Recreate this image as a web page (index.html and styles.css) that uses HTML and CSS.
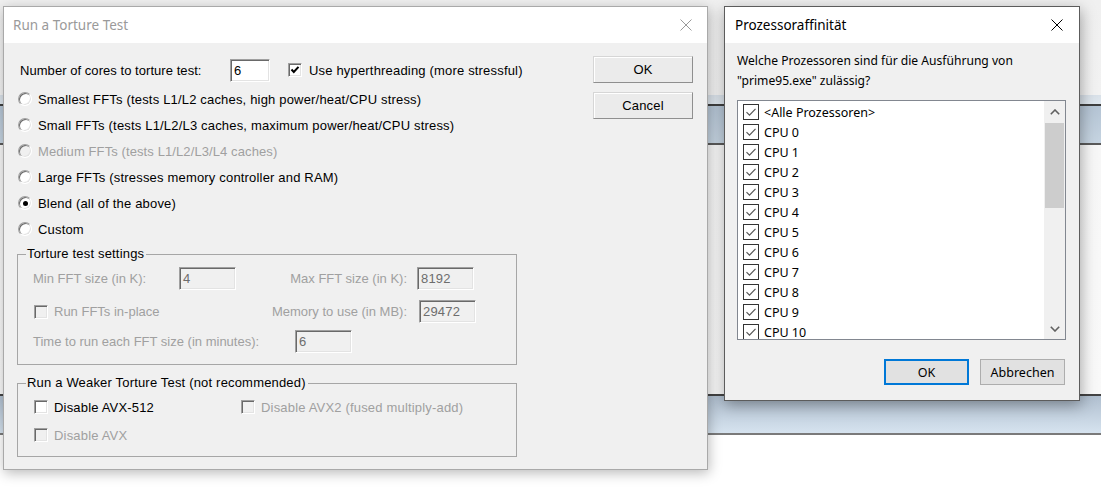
FILE: index.html
```html
<!DOCTYPE html>
<html lang="en">
<head>
<meta charset="utf-8">
<title>Run a Torture Test</title>
<link rel="stylesheet" href="styles.css">
</head>
<body>
<div class="desktop">

  <div class="win win-left">
    <div class="titlebar inactive">
      <span class="title">Run a Torture Test</span>
      <svg class="close" width="12" height="12" viewBox="0 0 12 12"><path d="M0.5 0.5 L11.5 11.5 M11.5 0.5 L0.5 11.5" stroke="#9a9a9a" stroke-width="1" fill="none"/></svg>
    </div>
    <div class="classic-body">
      <div class="main-col">
        <div class="cores-row">
          <span class="cores-lbl">Number of cores to torture test:</span>
          <span class="edit w40">6</span>
          <span class="chk ht"><svg width="12" height="12" viewBox="0 0 12 12"><polyline points="2.5,5.5 4.8,8 9.5,2.8" stroke="#000" stroke-width="2" fill="none"/></svg></span>
          <span class="nw">Use hyperthreading (more stressful)</span>
        </div>
        <div class="radios">
          <div class="radio-row"><span class="radio"></span>Smallest FFTs (tests L1/L2 caches, high power/heat/CPU stress)</div>
          <div class="radio-row"><span class="radio"></span>Small FFTs (tests L1/L2/L3 caches, maximum power/heat/CPU stress)</div>
          <div class="radio-row disabled"><span class="radio dis"></span>Medium FFTs (tests L1/L2/L3/L4 caches)</div>
          <div class="radio-row"><span class="radio"></span>Large FFTs (stresses memory controller and RAM)</div>
          <div class="radio-row"><span class="radio on"></span>Blend (all of the above)</div>
          <div class="radio-row"><span class="radio"></span>Custom</div>
        </div>

        <fieldset class="group g1">
          <legend>Torture test settings</legend>
          <div class="grow r1">
            <span class="dlbl w146">Min FFT size (in K):</span>
            <span class="edit dis w57">4</span>
            <span class="dlbl rlbl w181">Max FFT size (in K):</span>
            <span class="edit dis w57">8192</span>
          </div>
          <div class="grow r2">
            <span class="item w202"><span class="chk dis"></span><span class="dlbl">Run FFTs in-place</span></span>
            <span class="dlbl rlbl w183">Memory to use (in MB):</span>
            <span class="edit dis w57">29472</span>
          </div>
          <div class="grow r3">
            <span class="dlbl w262">Time to run each FFT size (in minutes):</span>
            <span class="edit dis w57">6</span>
          </div>
        </fieldset>

        <fieldset class="group g2">
          <legend>Run a Weaker Torture Test (not recommended)</legend>
          <div class="crow c1">
            <span class="item w207"><span class="chk"></span><span>Disable AVX-512</span></span>
            <span class="item"><span class="chk dis"></span><span class="dlbl">Disable AVX2 (fused multiply-add)</span></span>
          </div>
          <div class="crow c2">
            <span class="item"><span class="chk dis"></span><span class="dlbl">Disable AVX</span></span>
          </div>
        </fieldset>
      </div>
      <div class="btn-col">
        <button class="cbtn">OK</button>
        <button class="cbtn">Cancel</button>
      </div>
    </div>
  </div>

  <div class="win win-right">
    <div class="titlebar">
      <span class="title dark">Prozessoraffinität</span>
      <svg class="close" width="12" height="12" viewBox="0 0 12 12"><path d="M0.5 0.5 L11.5 11.5 M11.5 0.5 L0.5 11.5" stroke="#000" stroke-width="1" fill="none"/></svg>
    </div>
    <div class="modern-body">
      <p class="question">Welche Prozessoren sind für die Ausführung von<br>"prime95.exe" zulässig?</p>
      <div class="listbox">
        <div class="items">
          <div class="li"><span class="mchk"></span>&lt;Alle Prozessoren&gt;</div>
          <div class="li"><span class="mchk"></span>CPU 0</div>
          <div class="li"><span class="mchk"></span>CPU 1</div>
          <div class="li"><span class="mchk"></span>CPU 2</div>
          <div class="li"><span class="mchk"></span>CPU 3</div>
          <div class="li"><span class="mchk"></span>CPU 4</div>
          <div class="li"><span class="mchk"></span>CPU 5</div>
          <div class="li"><span class="mchk"></span>CPU 6</div>
          <div class="li"><span class="mchk"></span>CPU 7</div>
          <div class="li"><span class="mchk"></span>CPU 8</div>
          <div class="li"><span class="mchk"></span>CPU 9</div>
          <div class="li"><span class="mchk"></span>CPU 10</div>
        </div>
        <div class="scrollbar">
          <div class="sb-btn"><svg width="10" height="6" viewBox="0 0 10 6"><polyline points="0.8,5.2 5,1 9.2,5.2" stroke="#606060" stroke-width="1.6" fill="none"/></svg></div>
          <div class="sb-track"><div class="sb-thumb"></div></div>
          <div class="sb-btn"><svg width="10" height="6" viewBox="0 0 10 6"><polyline points="0.8,0.8 5,5 9.2,0.8" stroke="#606060" stroke-width="1.6" fill="none"/></svg></div>
        </div>
      </div>
      <div class="mbtns">
        <button class="mbtn default">OK</button>
        <button class="mbtn">Abbrechen</button>
      </div>
    </div>
  </div>

</div>
</body>
</html>
```

FILE: styles.css
```css
html, body {
  margin: 0;
  padding: 0;
  width: 1101px;
  height: 487px;
  overflow: hidden;
}

.desktop {
  position: relative;
  width: 1101px;
  height: 487px;
  background: linear-gradient(to bottom,
    #f0f0f0 0px, #f2f2f2 95px,
    #d9e1e9 95px, #dfe7ee 104px,
    #3f3f3f 104px, #3f3f3f 106px,
    #b4c4d4 106px, #c6d4e1 143px,
    #5a5a5a 143px, #5a5a5a 145px,
    #f7f7f7 145px, #f9f9f9 394px,
    #444444 394px, #444444 396px,
    #b0bfcf 396px, #d6e3ef 433px,
    #7a7a7a 433px, #7a7a7a 435px,
    #ffffff 435px, #ffffff 487px);
}

.win {
  position: absolute;
  box-sizing: border-box;
  display: flex;
  flex-direction: column;
  background: #f0f0f0;
}

.win-left {
  left: 3px;
  top: 6px;
  width: 705px;
  height: 464px;
  border: 1px solid #a9a9a9;
  box-shadow: 1px 3px 12px rgba(0, 0, 0, 0.28);
}

.win-right {
  left: 724px;
  top: 6px;
  width: 356px;
  height: 395px;
  border: 1px solid #5c5c5c;
  box-shadow: 1px 4px 14px rgba(0, 0, 0, 0.35);
}

.titlebar {
  height: 36px;
  flex: none;
  background: #ffffff;
  display: flex;
  align-items: center;
  justify-content: space-between;
  padding: 0 15px 0 9px;
}

.win-right .titlebar {
  padding: 0 16px 0 10px;
}

.title {
  font-family: "Noto Sans", "Open Sans", sans-serif;
  font-size: 13.5px;
  color: #9a9a9a;
  padding-bottom: 1px;
}

.title.dark {
  color: #000;
}

.close {
  display: block;
}

/* ---------- classic dialog ---------- */

.classic-body {
  flex: 1;
  display: flex;
  padding: 14px 0 0 13px;
  font-family: "Liberation Sans", Arial, sans-serif;
  font-size: 13px;
  letter-spacing: 0.18px;
  color: #000;
  white-space: nowrap;
}

.main-col {
  width: 500px;
  flex: none;
  display: flex;
  flex-direction: column;
}

.cores-row {
  height: 26px;
  display: flex;
  align-items: center;
}

.cores-lbl {
  width: 210px;
  flex: none;
  margin-left: 3px;
  letter-spacing: 0.05px;
}

.nw {
  flex: none;
}

.edit {
  box-sizing: border-box;
  height: 23px;
  display: inline-flex;
  align-items: center;
  padding-left: 3px;
  background: #ffffff;
  border: 1px solid;
  border-color: #a0a0a0 #ffffff #ffffff #a0a0a0;
  box-shadow: inset 1px 1px 0 #696969, inset -1px -1px 0 #e3e3e3;
  flex: none;
}

.edit.dis {
  background: #f0f0f0;
  color: #6d6d6d;
}

.w40 { width: 40px; }
.w57 { width: 57px; }
.w146 { width: 146px; flex: none; }
.w181 { width: 181px; flex: none; }
.w183 { width: 183px; flex: none; }
.w202 { width: 202px; flex: none; }
.w207 { width: 207px; flex: none; }
.w262 { width: 262px; flex: none; }

.chk {
  box-sizing: border-box;
  width: 14px;
  height: 14px;
  flex: none;
  display: inline-flex;
  align-items: center;
  justify-content: center;
  background: #ffffff;
  border: 1px solid;
  border-color: #a0a0a0 #ffffff #ffffff #a0a0a0;
  box-shadow: inset 1px 1px 0 #696969, inset -1px -1px 0 #e3e3e3;
  margin-right: 6px;
}

.chk.dis {
  background: #f0f0f0;
}

.chk svg {
  display: block;
}

.ht {
  margin-left: 18px;
  margin-right: 7px;
}

.radios {
  margin-top: 3px;
  display: flex;
  flex-direction: column;
}

.radio-row {
  height: 26px;
  display: flex;
  align-items: center;
}

.radio-row.disabled {
  color: #a0a0a0;
  letter-spacing: 0.1px;
}

.radio {
  box-sizing: border-box;
  width: 14px;
  height: 14px;
  border-radius: 50%;
  margin: 0 6px 0 1px;
  flex: none;
  background: #ffffff;
  border: 1px solid;
  border-color: #a0a0a0 #ffffff #ffffff #a0a0a0;
  box-shadow: inset 1px 1px 0 #696969, inset -1px -1px 0 #e3e3e3;
  display: flex;
  align-items: center;
  justify-content: center;
}

.radio.dis {
  background: #f0f0f0;
}

.radio.on::after {
  content: "";
  width: 5px;
  height: 5px;
  border-radius: 50%;
  background: #000;
}

.group {
  box-sizing: border-box;
  margin: 0;
  padding: 0;
  min-inline-size: 0;
  border: 1px solid #a6a6a6;
  border-radius: 0;
}

.group legend {
  margin-left: 8px;
  padding: 0 2px 0 1px;
  line-height: 14px;
  font-size: 13px;
}

.g1 {
  margin-top: 5px;
  height: 118px;
}

.g1 .dlbl {
  letter-spacing: 0;
}

.g2 {
  margin-top: 11px;
  height: 81px;
}

.dlbl {
  color: #a0a0a0;
}

.rlbl {
  text-align: right;
  box-sizing: border-box;
  padding-right: 10px;
}

.w183.rlbl {
  padding-right: 12px;
}

.grow {
  height: 23px;
  display: flex;
  align-items: center;
  padding-left: 15px;
}

.r1 { margin-top: 6px; }
.r2 { margin-top: 10px; padding-left: 16px; }
.r3 { margin-top: 7px; }

.item {
  display: inline-flex;
  align-items: center;
}

.crow {
  height: 16px;
  display: flex;
  align-items: center;
  padding-left: 16px;
}

.c1 { margin-top: 9px; }
.c2 { margin-top: 12px; }

.btn-col {
  margin-left: 76px;
  margin-top: -1px;
  display: flex;
  flex-direction: column;
  gap: 9px;
}

.cbtn {
  width: 100px;
  height: 27px;
  box-sizing: border-box;
  margin: 0;
  padding: 0;
  font-family: "Liberation Sans", Arial, sans-serif;
  font-size: 13px;
  letter-spacing: 0.18px;
  color: #000;
  background: #ebebeb;
  border: 1px solid;
  border-color: #d6d6d6 #8f8f8f #8f8f8f #d6d6d6;
  box-shadow: inset 1px 1px 0 #ffffff;
}

/* ---------- modern dialog ---------- */

.modern-body {
  flex: 1;
  padding: 7px 13px 0 12px;
  font-family: "Noto Sans", "Open Sans", sans-serif;
  font-size: 12.5px;
  color: #000;
}

.question {
  margin: 0;
  padding-top: 1px;
  line-height: 20px;
  font-size: 12.1px;
}

.listbox {
  box-sizing: border-box;
  margin-top: 9px;
  width: 329px;
  height: 240px;
  border: 1px solid #828790;
  background: #ffffff;
  display: flex;
}

.items {
  flex: 1;
  overflow: hidden;
  padding: 1px 0 0 5px;
}

.li {
  height: 20px;
  display: flex;
  align-items: center;
}

.mchk {
  box-sizing: border-box;
  width: 16px;
  height: 16px;
  flex: none;
  border: 1px solid #333333;
  margin-right: 5px;
  background: #ffffff url("data:image/svg+xml,%3Csvg xmlns='http://www.w3.org/2000/svg' width='14' height='14' viewBox='0 0 14 14'%3E%3Cpolyline points='2.5,7.2 5.5,10.2 11.5,3.8' stroke='%23555' stroke-width='1.2' fill='none'/%3E%3C/svg%3E") center / 14px 14px no-repeat;
}

.scrollbar {
  width: 21px;
  flex: none;
  background: #f0f0f0;
  display: flex;
  flex-direction: column;
}

.sb-btn {
  height: 21px;
  flex: none;
  display: flex;
  align-items: center;
  justify-content: center;
}

.sb-btn svg {
  display: block;
}

.sb-track {
  flex: 1;
  padding: 1px 1px 0 1px;
}

.sb-thumb {
  height: 85px;
  background: #cdcdcd;
}

.mbtns {
  margin-top: 19px;
  display: flex;
  justify-content: flex-end;
  gap: 11px;
  margin-right: 1px;
}

.mbtn {
  box-sizing: border-box;
  width: 85px;
  height: 26px;
  margin: 0;
  padding: 0;
  font-family: "Noto Sans", "Open Sans", sans-serif;
  font-size: 12.5px;
  color: #000;
  background: #e1e1e1;
  border: 1px solid #adadad;
}

.mbtn.default {
  border: 2px solid #0078d7;
}
```
